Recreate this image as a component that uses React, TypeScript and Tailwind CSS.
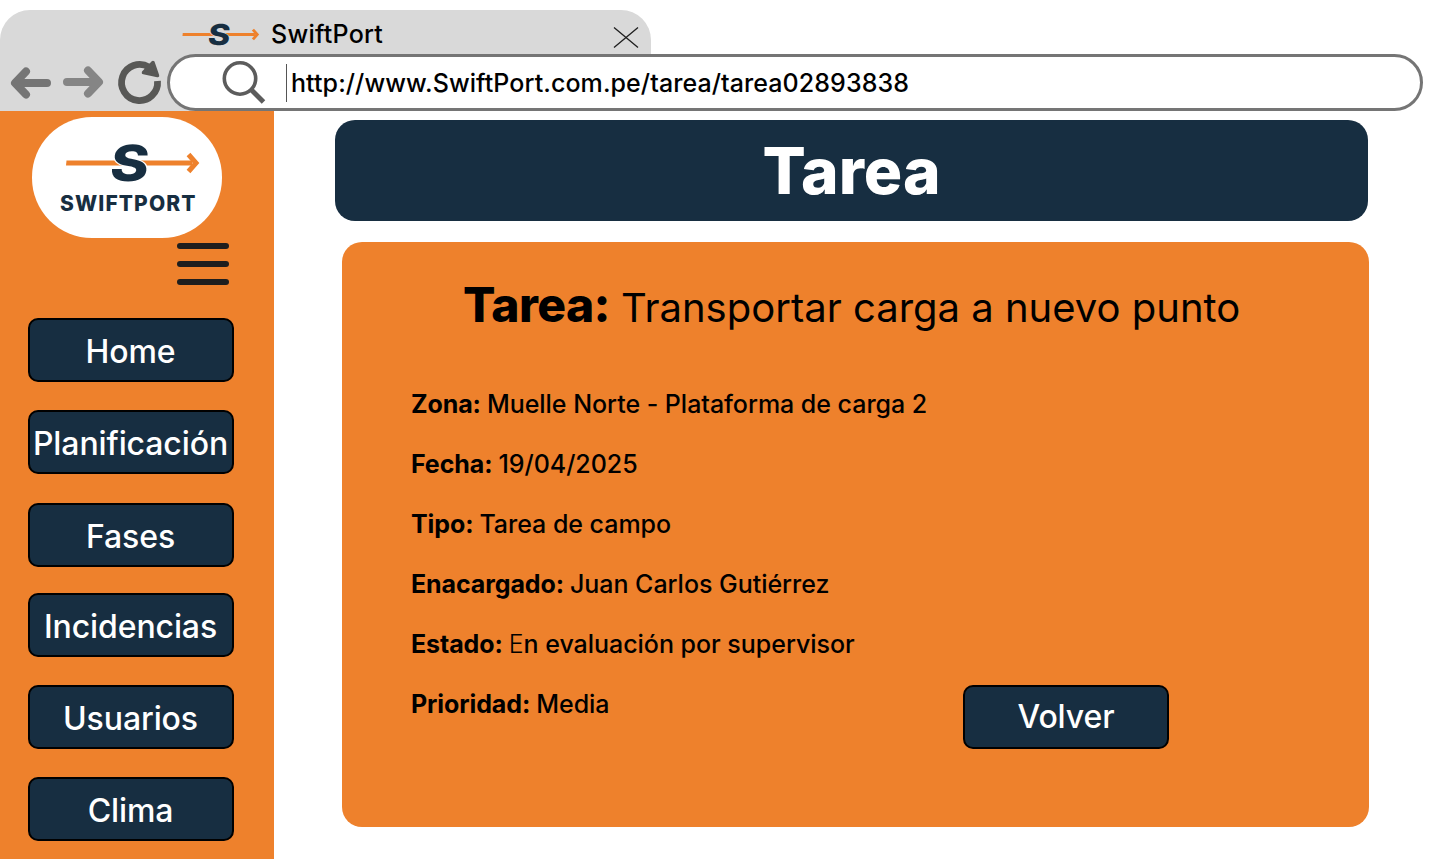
import React from "react";

const navItems = [
  { label: "Home", gap: "mt-0" },
  { label: "Planificación", gap: "mt-[28px]" },
  { label: "Fases", gap: "mt-[29px]" },
  { label: "Incidencias", gap: "mt-[26px]" },
  { label: "Usuarios", gap: "mt-[28px]" },
  { label: "Clima", gap: "mt-[28px]" },
];

const details = [
  { label: "Zona:", value: "Muelle Norte - Plataforma de carga 2" },
  { label: "Fecha:", value: "19/04/2025" },
  { label: "Tipo:", value: "Tarea de campo" },
  { label: "Enacargado:", value: "Juan Carlos Gutiérrez" },
  {
    label: "Estado:",
    value: (
      <>
        <span className="font-light">E</span>n evaluación por supervisor
      </>
    ),
  },
  { label: "Prioridad:", value: "Media" },
];

function LogoMark({ className, halo }: { className: string; halo: string }) {
  return (
    <svg className={`overflow-visible ${className}`} viewBox="0 0 134 40" fill="none">
      <path d="M0.500 17.600H126V22.600H0Z" fill="#ee812c" />
      <path d="M122.500 11.500L130 20L122.500 28.500" stroke="#ee812c" strokeWidth="5" />
      <text
        transform="translate(42.500 37.800) skewX(-7) scale(1.17 1)"
        fontFamily="Inter, sans-serif"
        fontWeight="800"
        fontSize="50"
        fill="#172e41"
        stroke={halo}
        strokeWidth="2"
        paintOrder="stroke"
      >
        S
      </text>
    </svg>
  );
}

function NavButton({ label, className }: { label: string; className: string }) {
  return (
    <button
      className={`flex h-16 w-[206px] shrink-0 items-center justify-center rounded-[10px] border-2 border-black bg-[#172e41] text-[32px] leading-10 font-medium tracking-[-0.1px] whitespace-nowrap text-white ${className}`}
    >
      {label}
    </button>
  );
}

function BrowserBar() {
  return (
    <header className="h-[111px] shrink-0 pt-[10px]">
      <div className="flex h-11 w-[651px] rounded-t-[30px] bg-[#d9d9d9] pl-[182px]">
        <LogoMark className="mt-[13px] h-[23px] w-[78px]" halo="#d9d9d9" />
        <span className="ml-[11px] pt-[9px] text-[25px] leading-[31px] font-medium tracking-[0.25px]">SwiftPort</span>
        <svg className="mt-[17px] mr-[12px] ml-auto h-[21px] w-[26px]" viewBox="0 0 26 21" stroke="#1e1e1e" strokeWidth="1.3">
          <path d="M1 0.5L25 20.5M25 0.5L1 20.5" />
        </svg>
      </div>
      <div className="flex h-[57px]">
        <div className="flex w-[200px] shrink-0 bg-[#d9d9d9]">
          <svg className="h-[57px] w-[166px]" viewBox="0 0 166 57" fill="none">
            <g strokeWidth="8" strokeLinecap="round" strokeLinejoin="round">
              <path d="M47 29H16M26 17.5L15 29L26 40.5" stroke="#757575" />
              <path d="M67 28H98M88 16.500L99 28L88 39.500" stroke="#858585" />
            </g>
            <path d="M157.500 27A18 18 0 1 1 149 13.200" stroke="#585856" strokeWidth="6.800" />
            <path d="M143.500 18.500L153 8.500L157.500 21.500Z" fill="#585856" stroke="#585856" strokeWidth="3.500" strokeLinejoin="round" />
          </svg>
        </div>
        <div className="-ml-[33px] flex w-[1256px] shrink-0 items-center rounded-full border-[3px] border-[#757575] bg-white pl-[52px]">
          <svg className="h-[44px] w-[46px]" viewBox="0 0 46 44" fill="none" stroke="#5c5c5c">
            <circle cx="18" cy="17.500" r="15.700" strokeWidth="3.600" />
            <path d="M28.500 28L41.500 41" strokeWidth="5" />
          </svg>
          <span className="ml-[18px] h-[38px] w-px bg-[#555]" />
          <span className="ml-[4px] text-[25px] leading-[30px] font-medium tracking-[0.08px] whitespace-nowrap">
            http://www.SwiftPort.com.pe/tarea/tarea02893838
          </span>
        </div>
      </div>
    </header>
  );
}

function Sidebar() {
  return (
    <aside className="flex w-[274px] shrink-0 flex-col bg-[#ee812c] pt-[6px] pl-7">
      <div className="ml-1 flex h-[121px] w-[190px] shrink-0 flex-col rounded-[60px] bg-white pt-[26px]">
        <LogoMark className="ml-[34px] h-10 w-[134px]" halo="#ffffff" />
        <span className="ml-[28px] pt-[9px] text-[21px] leading-[24px] font-extrabold tracking-[1.1px] text-[#172e41]">
          SWIFTPORT
        </span>
      </div>
      <button aria-label="Menu" className="mt-[5px] ml-[149px] flex w-[52px] shrink-0 flex-col gap-[12.5px]">
        <span className="h-[5.5px] w-full rounded-full bg-[#1e1e1e]" />
        <span className="h-[5.5px] w-full rounded-full bg-[#1e1e1e]" />
        <span className="h-[5.5px] w-full rounded-full bg-[#1e1e1e]" />
      </button>
      <nav className="mt-[33.5px] flex flex-col">
        {navItems.map((n) => (
          <NavButton key={n.label} label={n.label} className={`pt-[4px] pr-px ${n.gap}`} />
        ))}
      </nav>
    </aside>
  );
}

export default function App() {
  return (
    <div className="flex h-[859px] w-[1440px] flex-col overflow-hidden bg-white font-['Inter',sans-serif] text-black">
      <BrowserBar />
      <div className="flex min-h-0 flex-1">
        <Sidebar />
        <main className="flex flex-col pt-[9px] pl-[61px]">
          <h1 className="flex h-[101px] w-[1033px] shrink-0 items-center justify-center rounded-[20px] bg-[#172e41] text-[64px] font-extrabold text-white">
            Tarea
          </h1>
          <section className="mt-[21px] ml-[7px] flex h-[585px] w-[1027px] shrink-0 flex-col rounded-[20px] bg-[#ee812c] pl-[69px]">
            <h2 className="mt-[34px] ml-[52px] flex items-baseline text-[40px] leading-[58px] font-normal whitespace-nowrap">
              <span className="mr-[11px] text-[48px] font-extrabold tracking-[-0.6px]">Tarea:</span>
              <span>Transportar carga a nuevo punto</span>
            </h2>
            <div className="mt-[37px] flex">
              <dl className="w-[552px]">
                {details.map((d) => (
                  <div key={d.label} className="flex h-[60px] items-center gap-[6px] text-[25px] leading-[30px] whitespace-nowrap">
                    <dt className="font-bold tracking-[-0.1px]">{d.label}</dt>
                    <dd className="font-medium tracking-[-0.03px]">{d.value}</dd>
                  </div>
                ))}
              </dl>
              <NavButton label="Volver" className="mt-[311px] pb-px" />
            </div>
          </section>
        </main>
      </div>
    </div>
  );
}
